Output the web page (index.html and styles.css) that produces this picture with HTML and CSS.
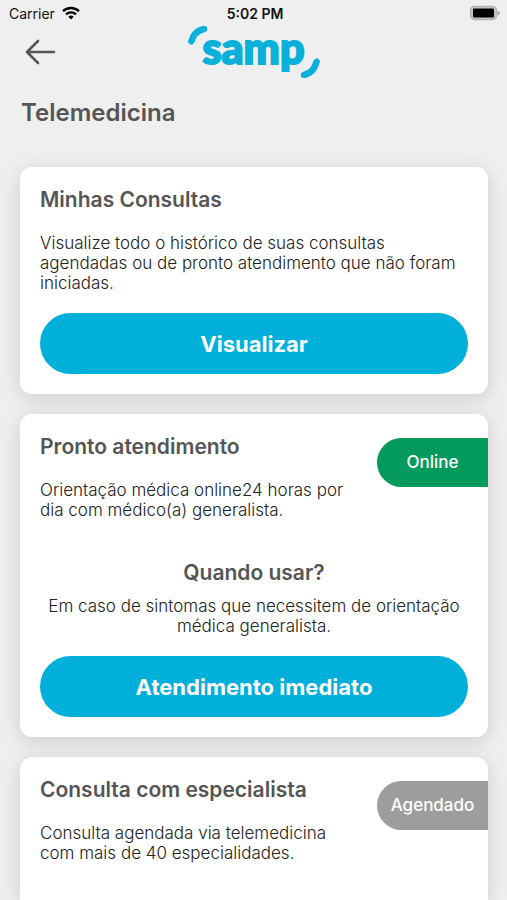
FILE: index.html
```html
<!DOCTYPE html>
<html lang="pt-BR">
<head>
<meta charset="utf-8">
<meta name="viewport" content="width=device-width, initial-scale=1">
<title>Telemedicina</title>
<link rel="stylesheet" href="styles.css">
</head>
<body>
<div class="status">
  <div class="carrier">
    <span>Carrier</span>
    <svg width="18" height="14" viewBox="0 0 18 14" fill="none" stroke="#000" stroke-width="2.4" aria-hidden="true">
      <path d="M1 5.2a11.5 11.5 0 0 1 16 0"/>
      <path d="M4 8.4a7.2 7.2 0 0 1 10 0"/>
      <path d="M9 13.4 6.3 10.700a3.900 3.900 0 0 1 5.400 0z" fill="#000" stroke="none"/>
    </svg>
  </div>
  <span class="time">5:02 PM</span>
  <svg class="battery" width="32" height="16" viewBox="0 0 32 16" aria-hidden="true">
    <rect x="1.500" y="1.500" width="26" height="13" rx="4" fill="#c4c4c4" stroke="#b4b4b4" stroke-width="1.500"/>
    <rect x="4" y="3.500" width="21" height="9" rx="1" fill="#000"/>
    <path d="M28.500 5.500q2.500 1 2.500 2.500t-2.500 2.500z" fill="#aaa"/>
  </svg>
</div>
<header class="topbar">
  <button class="back" type="button" aria-label="Voltar">
    <svg width="32" height="26" viewBox="0 0 32 26" fill="none" stroke="#555" stroke-width="2.600" stroke-linecap="round" stroke-linejoin="round" aria-hidden="true">
      <path d="M30 13H3M14 2 3 13l11 11"/>
    </svg>
  </button>
  <div class="logo">
    <svg width="134" height="56" viewBox="0 0 134 56" fill="none" stroke="#08b0da" aria-hidden="true">
      <path d="M4.500 17.500C6 10.500 10.500 6.500 17 5" stroke-width="6.500"/>
      <path d="M129.500 37.500C128 44.500 123.500 49.500 117 51" stroke-width="6.500"/>
      <path d="M4.200 17.500l.3-.5M129.800 37.500l-.3.5M17 5h.3M117 51h-.3" stroke-linecap="round" stroke-width="6"/>
    </svg>
    <span class="logo-name">samp</span>
  </div>
</header>
<main class="content">
  <h1>Telemedicina</h1>
  <section class="card">
    <h2>Minhas Consultas</h2>
    <p class="text">Visualize todo o histórico de suas consultas agendadas ou de pronto atendimento que não foram iniciadas.</p>
    <button class="action" type="button">Visualizar</button>
  </section>
  <section class="card">
    <span class="badge online">Online</span>
    <h2>Pronto atendimento</h2>
    <p class="text short">Orientação médica online24 horas por dia com médico(a) generalista.</p>
    <h3>Quando usar?</h3>
    <p class="text usage">Em caso de sintomas que necessitem de orientação médica generalista.</p>
    <button class="action" type="button">Atendimento imediato</button>
  </section>
  <section class="card last">
    <span class="badge scheduled">Agendado</span>
    <h2>Consulta com especialista</h2>
    <p class="text short">Consulta agendada via telemedicina com mais de 40 especialidades.</p>
  </section>
</main>
</body>
</html>
```
FILE: styles.css
```css
* {
  box-sizing: border-box;
}

body {
  margin: 0;
  min-height: 100vh;
  display: flex;
  flex-direction: column;
  background: #efefef;
  color: #222;
  font-family: Inter, "Liberation Sans", sans-serif;
}

h1, h2, h3, p {
  margin: 0;
}

button {
  border: 0;
  font-family: inherit;
  cursor: pointer;
}

.status {
  display: grid;
  grid-template-columns: 1fr auto 1fr;
  align-items: center;
  height: 24px;
  padding: 2px 6px 0 9px;
  color: #111;
  font-size: 14px;
}

.carrier {
  display: flex;
  align-items: center;
  gap: 7px;
}

.time {
  font-weight: 600;
}

.battery {
  justify-self: end;
}

.topbar {
  display: grid;
  grid-template-columns: 1fr auto 1fr;
  height: 56px;
  padding: 0 20px;
}

.back {
  justify-self: start;
  align-self: center;
  display: flex;
  padding: 4px;
  background: none;
}

.logo {
  position: relative;
  height: 56px;
}

.logo-name {
  position: absolute;
  inset: 0;
  color: #08b0da;
  font-family: Lato, sans-serif;
  font-size: 43px;
  font-weight: 900;
  line-height: 48px;
  text-align: center;
  -webkit-text-stroke: 2px #08b0da;
}

.content {
  flex: 1;
  display: flex;
  flex-direction: column;
  gap: 20px;
  padding: 18px 19px 0 20px;
}

h1 {
  margin-bottom: 19px;
  padding-left: 1px;
  color: #555;
  font-size: 24px;
  font-weight: 600;
  line-height: 30px;
}

.card {
  position: relative;
  padding: 20px;
  border-radius: 12px;
  background: #fff;
  box-shadow: 0 4px 20px rgba(0, 0, 0, 0.15);
}

.last {
  flex: 1;
  border-radius: 12px 12px 0 0;
}

h2, h3 {
  color: #555;
  font-size: 21px;
  font-weight: 600;
  line-height: 26px;
}

h3 {
  margin-top: 40px;
  text-align: center;
}

.text {
  margin-top: 20px;
  font-size: 17px;
  font-weight: 300;
  line-height: 20px;
}

.short {
  max-width: 310px;
}

.usage {
  margin-top: 10px;
  text-align: center;
}

.action {
  display: block;
  width: 100%;
  height: 61px;
  margin-top: 20px;
  border-radius: 31px;
  background: #00afda;
  color: #fff;
  font-size: 22px;
  font-weight: 700;
}

.badge {
  position: absolute;
  top: 24px;
  right: 0;
  width: 111px;
  border-radius: 25px 0 0 25px;
  color: #fff;
  font-size: 17px;
  font-weight: 500;
  line-height: 49px;
  text-align: center;
}

.online {
  background: #049a5b;
}

.scheduled {
  background: #9d9d9d;
}
```
